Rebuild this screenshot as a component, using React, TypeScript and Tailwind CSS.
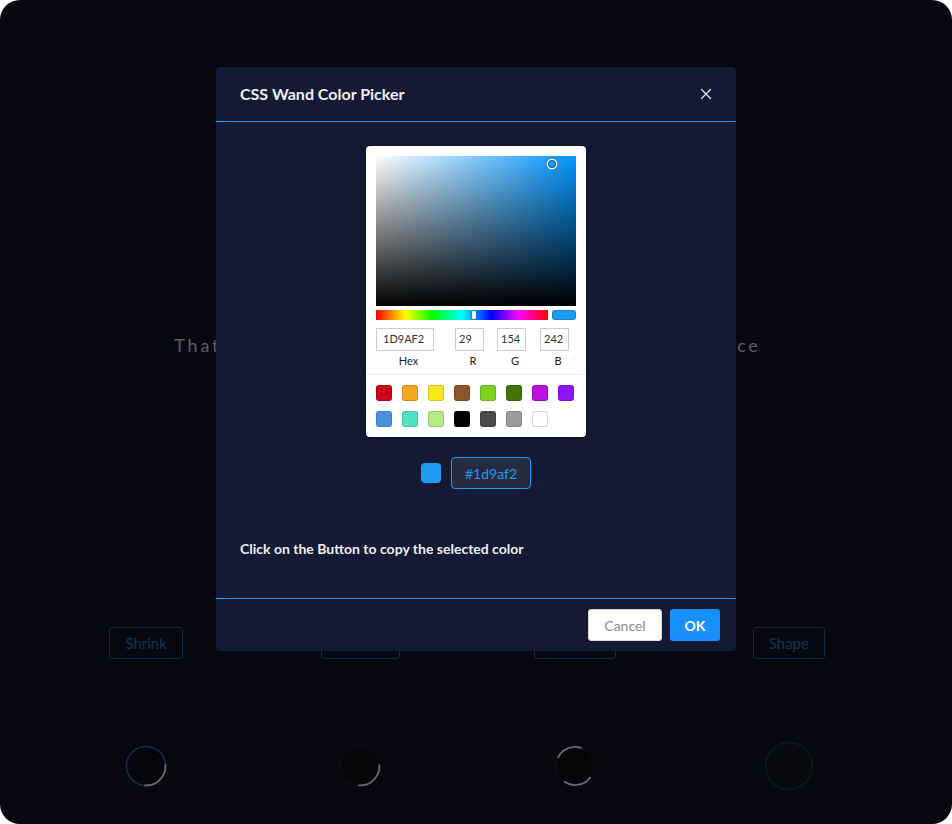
import React from 'react';
import { X } from 'lucide-react';

const swatches: string[] = [
  '#D0021B',
  '#F5A623',
  '#F8E71C',
  '#8B572A',
  '#7ED321',
  '#417505',
  '#BD10E0',
  '#9013FE',
  '#4A90E2',
  '#50E3C2',
  '#B8E986',
  '#000000',
  '#4A4A4A',
  '#9B9B9B',
  '#FFFFFF',
];

const arc = (cx: number, cy: number, r: number, a0: number, a1: number) => {
  const rad = (a: number) => (a * Math.PI) / 180;
  const x0 = cx + r * Math.cos(rad(a0));
  const y0 = cy + r * Math.sin(rad(a0));
  const x1 = cx + r * Math.cos(rad(a1));
  const y1 = cy + r * Math.sin(rad(a1));
  const large = a1 - a0 > 180 ? 1 : 0;
  return `M ${x0} ${y0} A ${r} ${r} 0 ${large} 1 ${x1} ${y1}`;
};

const Loader: React.FC<{ kind: number }> = ({ kind }) => {
  if (kind === 0)
    return (
      <svg width="42" height="42" viewBox="0 0 42 42">
        <circle cx="21" cy="21" r="19.5" fill="#050609" stroke="#0b3352" strokeWidth="1.5" />
        <path d={arc(21, 21, 19.5, -5, 95)} fill="none" stroke="#6b6b6b" strokeWidth="1.8" />
      </svg>
    );
  if (kind === 1)
    return (
      <svg width="42" height="42" viewBox="0 0 42 42">
        <circle cx="21" cy="21" r="19.5" fill="#050508" stroke="#0b0c10" strokeWidth="1.5" />
        <path d={arc(21, 21, 19.5, -5, 95)} fill="none" stroke="#6b6b6b" strokeWidth="1.8" />
      </svg>
    );
  if (kind === 2)
    return (
      <svg width="42" height="42" viewBox="0 0 42 42">
        <circle cx="21" cy="21" r="19" fill="#050508" stroke="#0b0c10" strokeWidth="1.5" />
        <path d={arc(21, 21, 19, 205, 290)} fill="none" stroke="#6b6b6b" strokeWidth="1.8" />
        <path d={arc(21, 21, 19, 35, 125)} fill="none" stroke="#6b6b6b" strokeWidth="1.8" />
      </svg>
    );
  return (
    <svg width="50" height="50" viewBox="0 0 50 50">
      <circle cx="25" cy="25" r="23.5" fill="#08090d" stroke="#0c1722" strokeWidth="1.5" />
    </svg>
  );
};

const ColorPicker: React.FC = () => (
  <div className="w-[220px] rounded-[4px] bg-white px-[10px] pt-[10px] shadow-[0_0_0_1px_rgba(0,0,0,0.15),0_8px_16px_rgba(0,0,0,0.15)]">
    {/* saturation */}
    <div className="relative h-[150px] w-[200px] bg-[#0095ff]">
      <div className="absolute inset-0 bg-gradient-to-r from-white to-transparent" />
      <div className="absolute inset-0 bg-gradient-to-t from-black to-transparent" />
      <div className="absolute left-[172px] top-[4px] h-[8px] w-[8px] rounded-full shadow-[0_0_0_1.5px_#fff,inset_0_0_1px_1px_rgba(0,0,0,0.3),0_0_1px_2px_rgba(0,0,0,0.4)]" />
    </div>
    <div className="mt-[4px] flex h-[10px] items-center">
      <div className="relative h-[10px] w-[172px] bg-[linear-gradient(to_right,#f00_0%,#ff0_17%,#0f0_33%,#0ff_50%,#00f_67%,#f0f_83%,#f00_100%)]">
        <div className="absolute left-[96px] top-[1px] h-[8px] w-[4px] rounded-[1px] bg-white shadow-[0_0_2px_rgba(0,0,0,0.6)]" />
      </div>
      <div className="ml-[4px] h-[10px] w-[24px] rounded-[3px] bg-[#1d9af2] shadow-[inset_0_0_0_1px_rgba(0,0,0,0.15)]" />
    </div>
    <div className="mt-[8px] flex text-[11px] text-[#333]">
      <div className="w-[58px]">
        <div className="flex h-[23px] items-center pl-[7px] shadow-[inset_0_0_0_1px_#ccc]">1D9AF2</div>
        <div className="pl-[7px] pt-[3px] text-center text-[11px] leading-[14px] text-[#222]">Hex</div>
      </div>
      <div className="ml-[21px] w-[29px]">
        <div className="flex h-[23px] items-center pl-[4px] shadow-[inset_0_0_0_1px_#ccc]">29</div>
        <div className="pl-[7px] pt-[3px] text-center text-[11px] leading-[14px] text-[#222]">R</div>
      </div>
      <div className="ml-[13px] w-[29px]">
        <div className="flex h-[23px] items-center pl-[4px] shadow-[inset_0_0_0_1px_#ccc]">154</div>
        <div className="pl-[7px] pt-[3px] text-center text-[11px] leading-[14px] text-[#222]">G</div>
      </div>
      <div className="ml-[14px] w-[29px]">
        <div className="flex h-[23px] items-center pl-[4px] shadow-[inset_0_0_0_1px_#ccc]">242</div>
        <div className="pl-[7px] pt-[3px] text-center text-[11px] leading-[14px] text-[#222]">B</div>
      </div>
    </div>
    <div className="-mx-[10px] mt-[6px] flex flex-wrap border-t border-[#eee] pl-[10px] pt-[10px]">
      {swatches.map((c) => (
        <div
          key={c}
          className="mb-[10px] mr-[10px] h-[16px] w-[16px] rounded-[3px] shadow-[inset_0_0_0_1px_rgba(0,0,0,0.15)]"
          style={{ backgroundColor: c }}
        />
      ))}
    </div>
  </div>
);

const App: React.FC = () => {
  return (
    <div className="min-h-screen bg-white font-['Lato','Noto_Sans',sans-serif]">
      <div className="relative h-[824px] w-[952px] overflow-hidden rounded-[20px] bg-[#07080f]">
        {/* page behind the modal */}
        <div className="pl-[39px] pr-[56px] pt-[333px]">
          <p className="text-center text-[18px] leading-[24px] tracking-[2.8px] text-[#5a5f66]">
            That is the power of a small CSS touch on the interface
          </p>
          <div className="mt-[270px] grid grid-cols-4">
            {['Shrink', 'Stretch', 'Bounce', 'Shape'].map((b) => (
              <div key={b} className="flex justify-center">
                <button className="h-[32px] rounded-[3px] border border-[#0b2d49] px-[15px] text-[15px] text-[#0e3557]">
                  {b}
                </button>
              </div>
            ))}
          </div>
          <div className="mt-[82px] grid h-[48px] grid-cols-4 items-center">
            {[0, 1, 2, 3].map((k) => (
              <div key={k} className="flex justify-center">
                <Loader kind={k} />
              </div>
            ))}
          </div>
        </div>

        {/* modal */}
        <div className="absolute left-[216px] top-[67px] w-[520px] rounded-[4px] bg-[#141a33]">
          <div className="flex h-[55px] items-center justify-between border-b border-[#1d9af2] pl-6 pr-[21px]">
            <h2 className="text-[16px] font-bold text-[#eef0f4]">CSS Wand Color Picker</h2>
            <X size={18} strokeWidth={1.6} className="text-[#e5e7eb]" />
          </div>
          <div className="flex flex-col items-center pt-6">
            <ColorPicker />
            <div className="mt-[20px] flex items-center gap-[10px]">
              <div className="h-[20px] w-[20px] rounded-[4px] bg-[#1d9af2]" />
              <div className="flex h-[32px] w-[80px] items-center justify-center rounded-[4px] border border-[#1d9af2] bg-[#262b3f] text-[14px] text-[#1d9af2]">
                #1d9af2
              </div>
            </div>
          </div>
          <p className="px-6 pb-[39px] pt-[49px] text-[14px] font-bold text-[#eef0f4]">
            Click on the Button to copy the selected color
          </p>
          <div className="flex justify-end gap-2 border-t border-[#1d9af2] px-4 pb-[10px] pt-[10px]">
            <button className="h-[32px] w-[74px] rounded-[3px] border border-[#d9d9d9] bg-white text-[14px] text-[#8a8a8a]">
              Cancel
            </button>
            <button className="h-[32px] w-[50px] rounded-[3px] bg-[#1890ff] text-[14px] font-bold text-white">
              OK
            </button>
          </div>
        </div>
      </div>
    </div>
  );
};

export default App;
